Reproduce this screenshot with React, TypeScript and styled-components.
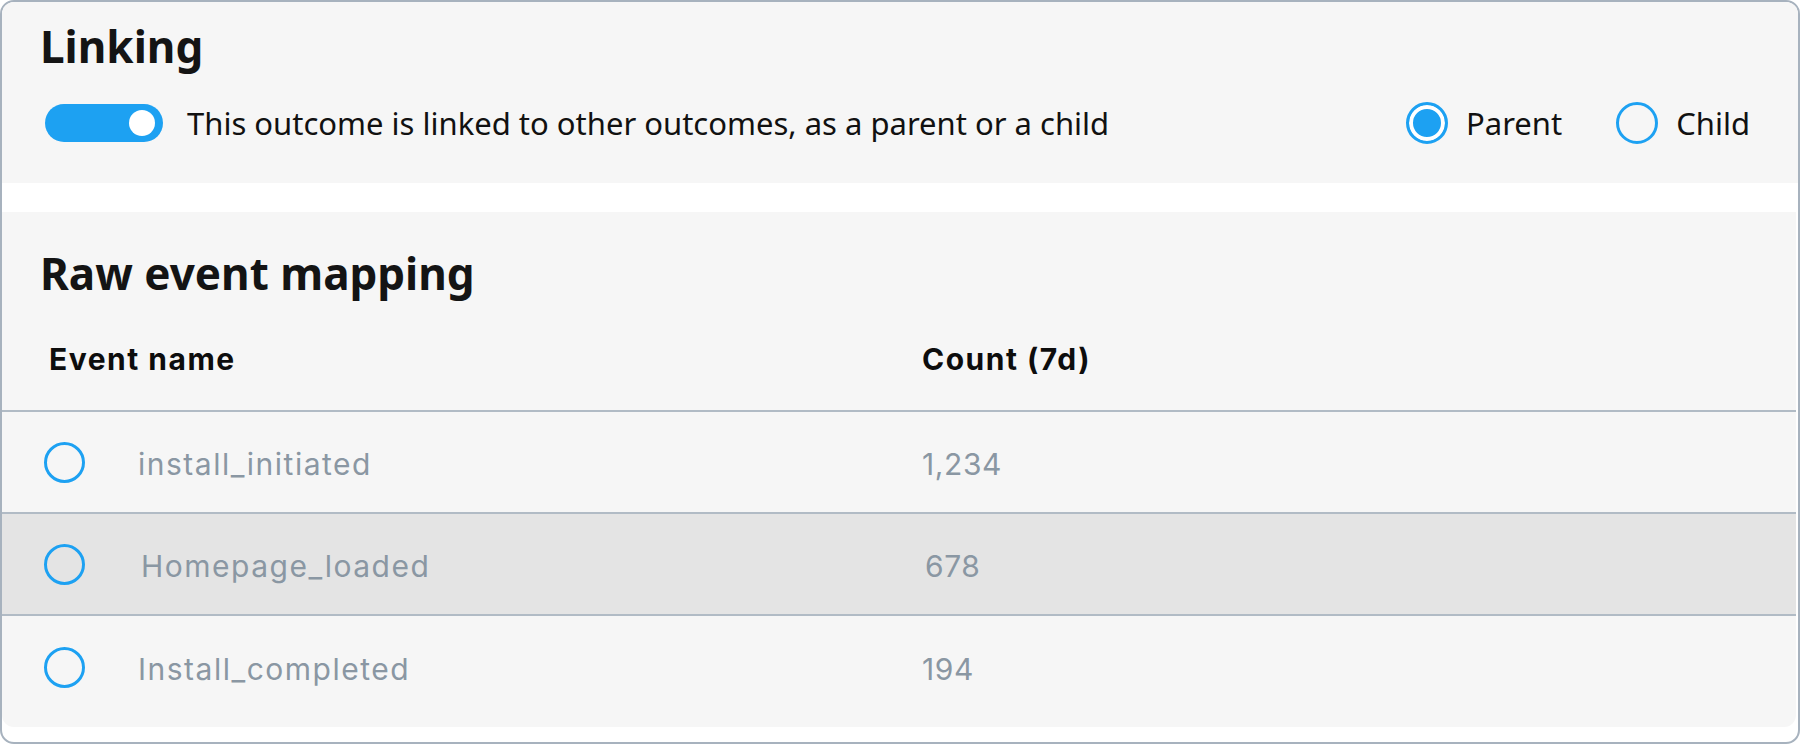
import styled, { createGlobalStyle } from 'styled-components';

const GlobalStyle = createGlobalStyle`
  html, body {
    margin: 0;
    padding: 0;
    background: #ffffff;
  }
  * {
    box-sizing: border-box;
  }
`;

const Frame = styled.div`
  width: 1800px;
  height: 744px;
  border: 2px solid #a7b2be;
  border-radius: 14px;
  background: #ffffff;
  overflow: hidden;
  display: flex;
  flex-direction: column;
  padding-bottom: 16px;
`;

const LinkingSection = styled.section`
  height: 181px;
  flex-shrink: 0;
  background: #f6f6f6;
  padding: 0 48px 0 38px;
`;

const Heading = styled.h2<{ $top: number }>`
  margin: ${(p) => p.$top}px 0 0;
  font-family: "Noto Sans", "Open Sans", sans-serif;
  font-weight: 700;
  font-size: 44px;
  line-height: 56px;
  color: #141414;
`;

const LinkRow = styled.div`
  display: flex;
  align-items: center;
  height: 42px;
  margin-top: 28px;
  padding-left: 5px;
`;

const Toggle = styled.span`
  position: relative;
  width: 118px;
  height: 38px;
  border-radius: 19px;
  background: #1da1f2;
  flex-shrink: 0;
  margin-right: 24px;

  &::after {
    content: '';
    position: absolute;
    right: 8px;
    top: 6px;
    width: 26px;
    height: 26px;
    border-radius: 50%;
    background: #ffffff;
  }
`;

const Label = styled.span`
  font-family: "Noto Sans", "Open Sans", sans-serif;
  font-size: 31px;
  color: #111111;
`;

const RadioGroup = styled.div`
  display: flex;
  align-items: center;
  gap: 54px;
  margin-left: auto;
`;

const RadioOption = styled.label`
  display: flex;
  align-items: center;
  gap: 18px;
  font-family: "Noto Sans", "Open Sans", sans-serif;
  font-size: 31px;
  color: #111111;
`;

const Radio = styled.span<{ $checked?: boolean; $size: number }>`
  display: inline-block;
  flex-shrink: 0;
  width: ${(p) => p.$size}px;
  height: ${(p) => p.$size}px;
  border-radius: 50%;
  border: 3px solid #1da1f2;
  background: ${(p) => (p.$checked ? '#1da1f2' : 'transparent')};
  box-shadow: ${(p) => (p.$checked ? 'inset 0 0 0 4px #ffffff' : 'none')};
`;

const MappingSection = styled.section`
  flex: 1;
  background: #f6f6f6;
  margin: 29px 2px 0 0;
  padding: 32px 0 9px;
  border-radius: 0 0 12px 12px;
`;

const HeadingWrap = styled.div`
  padding-left: 38px;
`;

const TableHead = styled.div`
  display: grid;
  grid-template-columns: 873px 1fr;
  height: 111px;
  padding: 40px 0 0 47px;
  border-bottom: 2px solid #b1bbc5;
  font-family: Inter, "Noto Sans", sans-serif;
  font-weight: 700;
  font-size: 30px;
  line-height: 36px;
  letter-spacing: 1.5px;
  color: #0d0d0d;
`;

const Row = styled.div<{ $shaded?: boolean; $last?: boolean; $shift?: number }>`
  display: grid;
  grid-template-columns: ${(p) => 94 + (p.$shift ?? 0)}px 784px 1fr;
  align-items: center;
  height: 102px;
  padding-left: 42px;
  background: ${(p) => (p.$shaded ? '#e4e4e4' : 'transparent')};
  border-bottom: ${(p) => (p.$last ? 'none' : '2px solid #b1bbc5')};
`;

const Cell = styled.span<{ $spacing: number }>`
  padding-top: 3px;
  font-family: Inter, "Noto Sans", sans-serif;
  font-size: 30px;
  line-height: 36px;
  letter-spacing: ${(p) => p.$spacing}px;
  color: #8a97a3;
`;

const events = [
  { name: 'install_initiated', count: '1,234', shift: 0 },
  { name: 'Homepage_loaded', count: '678', shift: 3 },
  { name: 'Install_completed', count: '194', shift: 0 },
];

export default function App() {
  return (
    <>
      <GlobalStyle />
      <Frame>
        <LinkingSection>
          <Heading $top={16}>Linking</Heading>
          <LinkRow>
            <Toggle />
            <Label>This outcome is linked to other outcomes, as a parent or a child</Label>
            <RadioGroup>
              <RadioOption>
                <Radio $size={42} $checked />
                Parent
              </RadioOption>
              <RadioOption>
                <Radio $size={42} />
                Child
              </RadioOption>
            </RadioGroup>
          </LinkRow>
        </LinkingSection>

        <MappingSection>
          <HeadingWrap>
            <Heading $top={1}>Raw event mapping</Heading>
          </HeadingWrap>
          <TableHead>
            <span>Event name</span>
            <span>Count (7d)</span>
          </TableHead>
          {events.map((e, i) => (
            <Row key={e.name} $shaded={i === 1} $last={i === events.length - 1} $shift={e.shift}>
              <Radio $size={41} />
              <Cell $spacing={1.5}>{e.name}</Cell>
              <Cell $spacing={0.6}>{e.count}</Cell>
            </Row>
          ))}
        </MappingSection>
      </Frame>
    </>
  );
}
